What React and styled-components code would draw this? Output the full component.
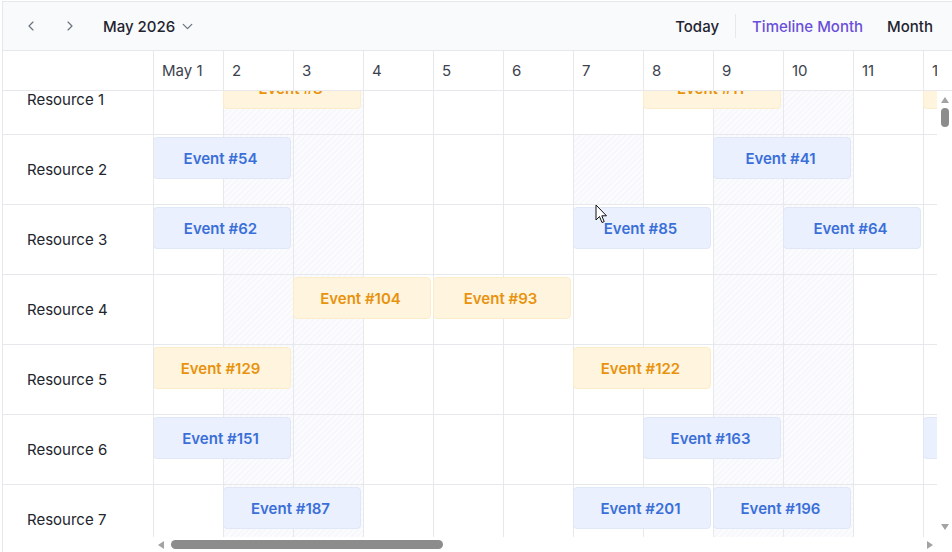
import React from "react";
import styled, { createGlobalStyle } from "styled-components";
import { ChevronLeft, ChevronRight, ChevronDown } from "lucide-react";

const GlobalStyle = createGlobalStyle`
  html, body { margin: 0; padding: 0; background: #ffffff; overflow: hidden; }
  body { font-family: Inter, "Noto Sans", sans-serif; }
  * { box-sizing: border-box; }
`;

const LINE = "#e7e8ec";
const DAY_W = 70;
const ROW_H = 70;
const SCROLL_TOP = 26;

const Frame = styled.div`
  position: relative;
  margin: 1px 0 0 2px;
  width: 950px;
  height: 551px;
  border-left: 1px solid ${LINE};
  border-top: 1px solid ${LINE};
  display: flex;
  flex-direction: column;
  overflow: hidden;
`;

const Toolbar = styled.div`
  height: 49px;
  flex: none;
  display: flex;
  align-items: center;
  justify-content: space-between;
  padding: 0 7px 0 12px;
  background: #f9fafc;
  border-bottom: 1px solid ${LINE};
`;

const Group = styled.div`
  display: flex;
  align-items: center;
`;

const NavButton = styled.button`
  width: 32px;
  height: 32px;
  margin-right: ${(p) => p.$gap || 0}px;
  border: 0;
  background: transparent;
  display: flex;
  align-items: center;
  justify-content: center;
  color: #6b7280;
  padding: 0;
`;

const DateButton = styled.button`
  margin-left: 9px;
  border: 0;
  background: transparent;
  display: flex;
  align-items: center;
  gap: 4px;
  padding: 0 8px;
  font-family: Inter, sans-serif;
  font-size: 15px;
  font-weight: 500;
  color: #1f2430;
  svg { color: #6b7280; }
`;

const ViewButton = styled.button`
  border: 0;
  background: transparent;
  padding: 0 12px;
  height: 32px;
  font-family: Inter, sans-serif;
  font-size: 15px;
  font-weight: 500;
  color: ${(p) => (p.$active ? "#6a4fd8" : "#1f2430")};
`;

const Divider = styled.div`
  width: 1px;
  height: 24px;
  margin: 0 4px;
  background: ${LINE};
`;

const HeaderRow = styled.div`
  height: 40px;
  flex: none;
  display: grid;
  grid-template-columns: 151px 783px 15px;
  border-bottom: 1px solid ${LINE};
`;

const CornerCell = styled.div`
  border-right: 1px solid ${LINE};
`;

const Viewport = styled.div`
  overflow: hidden;
  position: relative;
`;

const DayStrip = styled.div`
  display: grid;
  grid-template-columns: repeat(${(p) => p.$count}, ${DAY_W}px);
  height: 100%;
`;

const DayHead = styled.div`
  border-right: 1px solid ${LINE};
  display: flex;
  align-items: center;
  padding-left: 8px;
  font-size: 15px;
  color: #3d424d;
  white-space: nowrap;
`;

const Body = styled.div`
  flex: 1;
  display: grid;
  grid-template-columns: 151px 783px 15px;
  grid-template-rows: 446px 15px;
`;

const ResourceColumn = styled.div`
  overflow: hidden;
  border-right: 1px solid ${LINE};
`;

const Scrolled = styled.div`
  margin-top: -${SCROLL_TOP}px;
`;

const ResourceCell = styled.div`
  height: ${ROW_H}px;
  border-bottom: 1px solid ${LINE};
  display: flex;
  align-items: center;
  padding-left: 24px;
  font-size: 15px;
  color: #22252d;
`;

const TimelineRow = styled.div`
  height: ${ROW_H}px;
  border-bottom: 1px solid ${LINE};
  display: grid;
  grid-template-columns: repeat(${(p) => p.$count}, ${DAY_W}px);
  grid-template-rows: ${ROW_H - 1}px;
`;

const hatch = `repeating-linear-gradient(135deg, #f7f8fb 0 2px, #fcfcfe 2px 4px)`;

const DayCell = styled.div`
  grid-row: 1;
  grid-column: ${(p) => p.$col};
  border-right: 1px solid ${LINE};
  background: ${(p) => (p.$shade ? hatch : "transparent")};
`;

const EventBar = styled.div`
  grid-row: 1;
  grid-column: ${(p) => p.$col} / span ${(p) => p.$span};
  align-self: start;
  margin: 2px 3px 0 -1px;
  height: 42px;
  border-radius: 4px;
  border: 1px solid ${(p) => (p.$tone === "orange" ? "#fcecca" : "#e0e7f6")};
  background: ${(p) => (p.$tone === "orange" ? "#fff5de" : "#eaf0fd")};
  color: ${(p) => (p.$tone === "orange" ? "#e8920e" : "#3a6fd8")};
  font-size: 15px;
  font-weight: 600;
  display: flex;
  align-items: center;
  justify-content: center;
  padding-right: 3px;
  white-space: nowrap;
  overflow: hidden;
  z-index: 1;
`;

const VScroll = styled.div`
  display: flex;
  flex-direction: column;
  align-items: center;
  padding-top: 6px;
  padding-bottom: 7px;
`;

const HScroll = styled.div`
  grid-column: 2;
  display: flex;
  align-items: center;
  padding-left: 4px;
  padding-right: 4px;
`;

const Arrow = styled.div`
  width: 0;
  height: 0;
  flex: none;
  ${(p) =>
    p.$dir === "up"
      ? `border-left: 4.5px solid transparent; border-right: 4.5px solid transparent; border-bottom: 6px solid #a3a3a3;`
      : p.$dir === "down"
      ? `border-left: 4.5px solid transparent; border-right: 4.5px solid transparent; border-top: 6px solid #a3a3a3;`
      : p.$dir === "left"
      ? `border-top: 4.5px solid transparent; border-bottom: 4.5px solid transparent; border-right: 6px solid #a3a3a3;`
      : `border-top: 4.5px solid transparent; border-bottom: 4.5px solid transparent; border-left: 6px solid #a3a3a3;`}
`;

const VTrack = styled.div`
  flex: 1;
  width: 100%;
  display: flex;
  flex-direction: column;
  align-items: center;
  padding-top: 5px;
`;

const VThumb = styled.div`
  width: 8px;
  height: 19px;
  border-radius: 4px;
  background: #8c8c8c;
`;

const HTrack = styled.div`
  flex: 1;
  height: 100%;
  display: flex;
  align-items: center;
  padding-left: 7px;
`;

const HThumb = styled.div`
  width: 272px;
  height: 9px;
  border-radius: 5px;
  background: #8c8c8c;
`;

const Cursor = styled.svg`
  position: absolute;
  left: 592px;
  top: 202px;
  z-index: 5;
`;

const DAYS = Array.from({ length: 31 }, (_, i) => i + 1);
const WEEKENDS = new Set([2, 3, 9, 10, 16, 17, 23, 24, 30, 31]);

const RESOURCES = [
  { name: "Resource 1", events: [
    { id: 8, day: 2, tone: "orange" },
    { id: 11, day: 8, tone: "orange" },
    { id: 13, day: 12, tone: "orange" },
  ] },
  { name: "Resource 2", hover: 7, events: [
    { id: 54, day: 1 },
    { id: 41, day: 9 },
  ] },
  { name: "Resource 3", events: [
    { id: 62, day: 1 },
    { id: 85, day: 7 },
    { id: 64, day: 10 },
  ] },
  { name: "Resource 4", events: [
    { id: 104, day: 3, tone: "orange" },
    { id: 93, day: 5, tone: "orange" },
  ] },
  { name: "Resource 5", events: [
    { id: 129, day: 1, tone: "orange" },
    { id: 122, day: 7, tone: "orange" },
  ] },
  { name: "Resource 6", events: [
    { id: 151, day: 1 },
    { id: 163, day: 8 },
    { id: 170, day: 12 },
  ] },
  { name: "Resource 7", events: [
    { id: 187, day: 2 },
    { id: 201, day: 7 },
    { id: 196, day: 9 },
  ] },
  { name: "Resource 8", events: [] },
];

export default function App() {
  return (
    <>
      <GlobalStyle />
      <Frame>
        <Toolbar>
          <Group>
            <NavButton $gap={7} aria-label="Previous">
              <ChevronLeft size={16} strokeWidth={1.75} />
            </NavButton>
            <NavButton aria-label="Next">
              <ChevronRight size={16} strokeWidth={1.75} />
            </NavButton>
            <DateButton>
              May 2026
              <ChevronDown size={17} strokeWidth={1.75} />
            </DateButton>
          </Group>
          <Group>
            <ViewButton>Today</ViewButton>
            <Divider />
            <ViewButton $active>Timeline Month</ViewButton>
            <ViewButton>Month</ViewButton>
          </Group>
        </Toolbar>

        <HeaderRow>
          <CornerCell />
          <Viewport>
            <DayStrip $count={DAYS.length}>
              {DAYS.map((d) => (
                <DayHead key={d}>{d === 1 ? "May 1" : d}</DayHead>
              ))}
            </DayStrip>
          </Viewport>
          <div />
        </HeaderRow>

        <Body>
          <ResourceColumn>
            <Scrolled>
              {RESOURCES.map((r) => (
                <ResourceCell key={r.name}>{r.name}</ResourceCell>
              ))}
            </Scrolled>
          </ResourceColumn>
          <Viewport>
            <Scrolled>
              {RESOURCES.map((r) => (
                <TimelineRow key={r.name} $count={DAYS.length}>
                  {DAYS.map((d) => (
                    <DayCell key={d} $col={d} $shade={WEEKENDS.has(d) || r.hover === d} />
                  ))}
                  {r.events.map((e) => (
                    <EventBar key={e.id} $col={e.day} $span={2} $tone={e.tone}>
                      Event #{e.id}
                    </EventBar>
                  ))}
                </TimelineRow>
              ))}
            </Scrolled>
          </Viewport>
          <VScroll>
            <Arrow $dir="up" />
            <VTrack>
              <VThumb />
            </VTrack>
            <Arrow $dir="down" />
          </VScroll>
          <HScroll>
            <Arrow $dir="left" />
            <HTrack>
              <HThumb />
            </HTrack>
            <Arrow $dir="right" />
          </HScroll>
        </Body>

        <Cursor width="13" height="20" viewBox="0 0 13 20">
          <path d="M1 1 L1 16 L4.5 12.5 L7 18.5 L9.2 17.6 L6.8 11.8 L11.5 11.8 Z" fill="#ffffff" stroke="#111" strokeWidth="1" strokeLinejoin="round" />
        </Cursor>
      </Frame>
    </>
  );
}
